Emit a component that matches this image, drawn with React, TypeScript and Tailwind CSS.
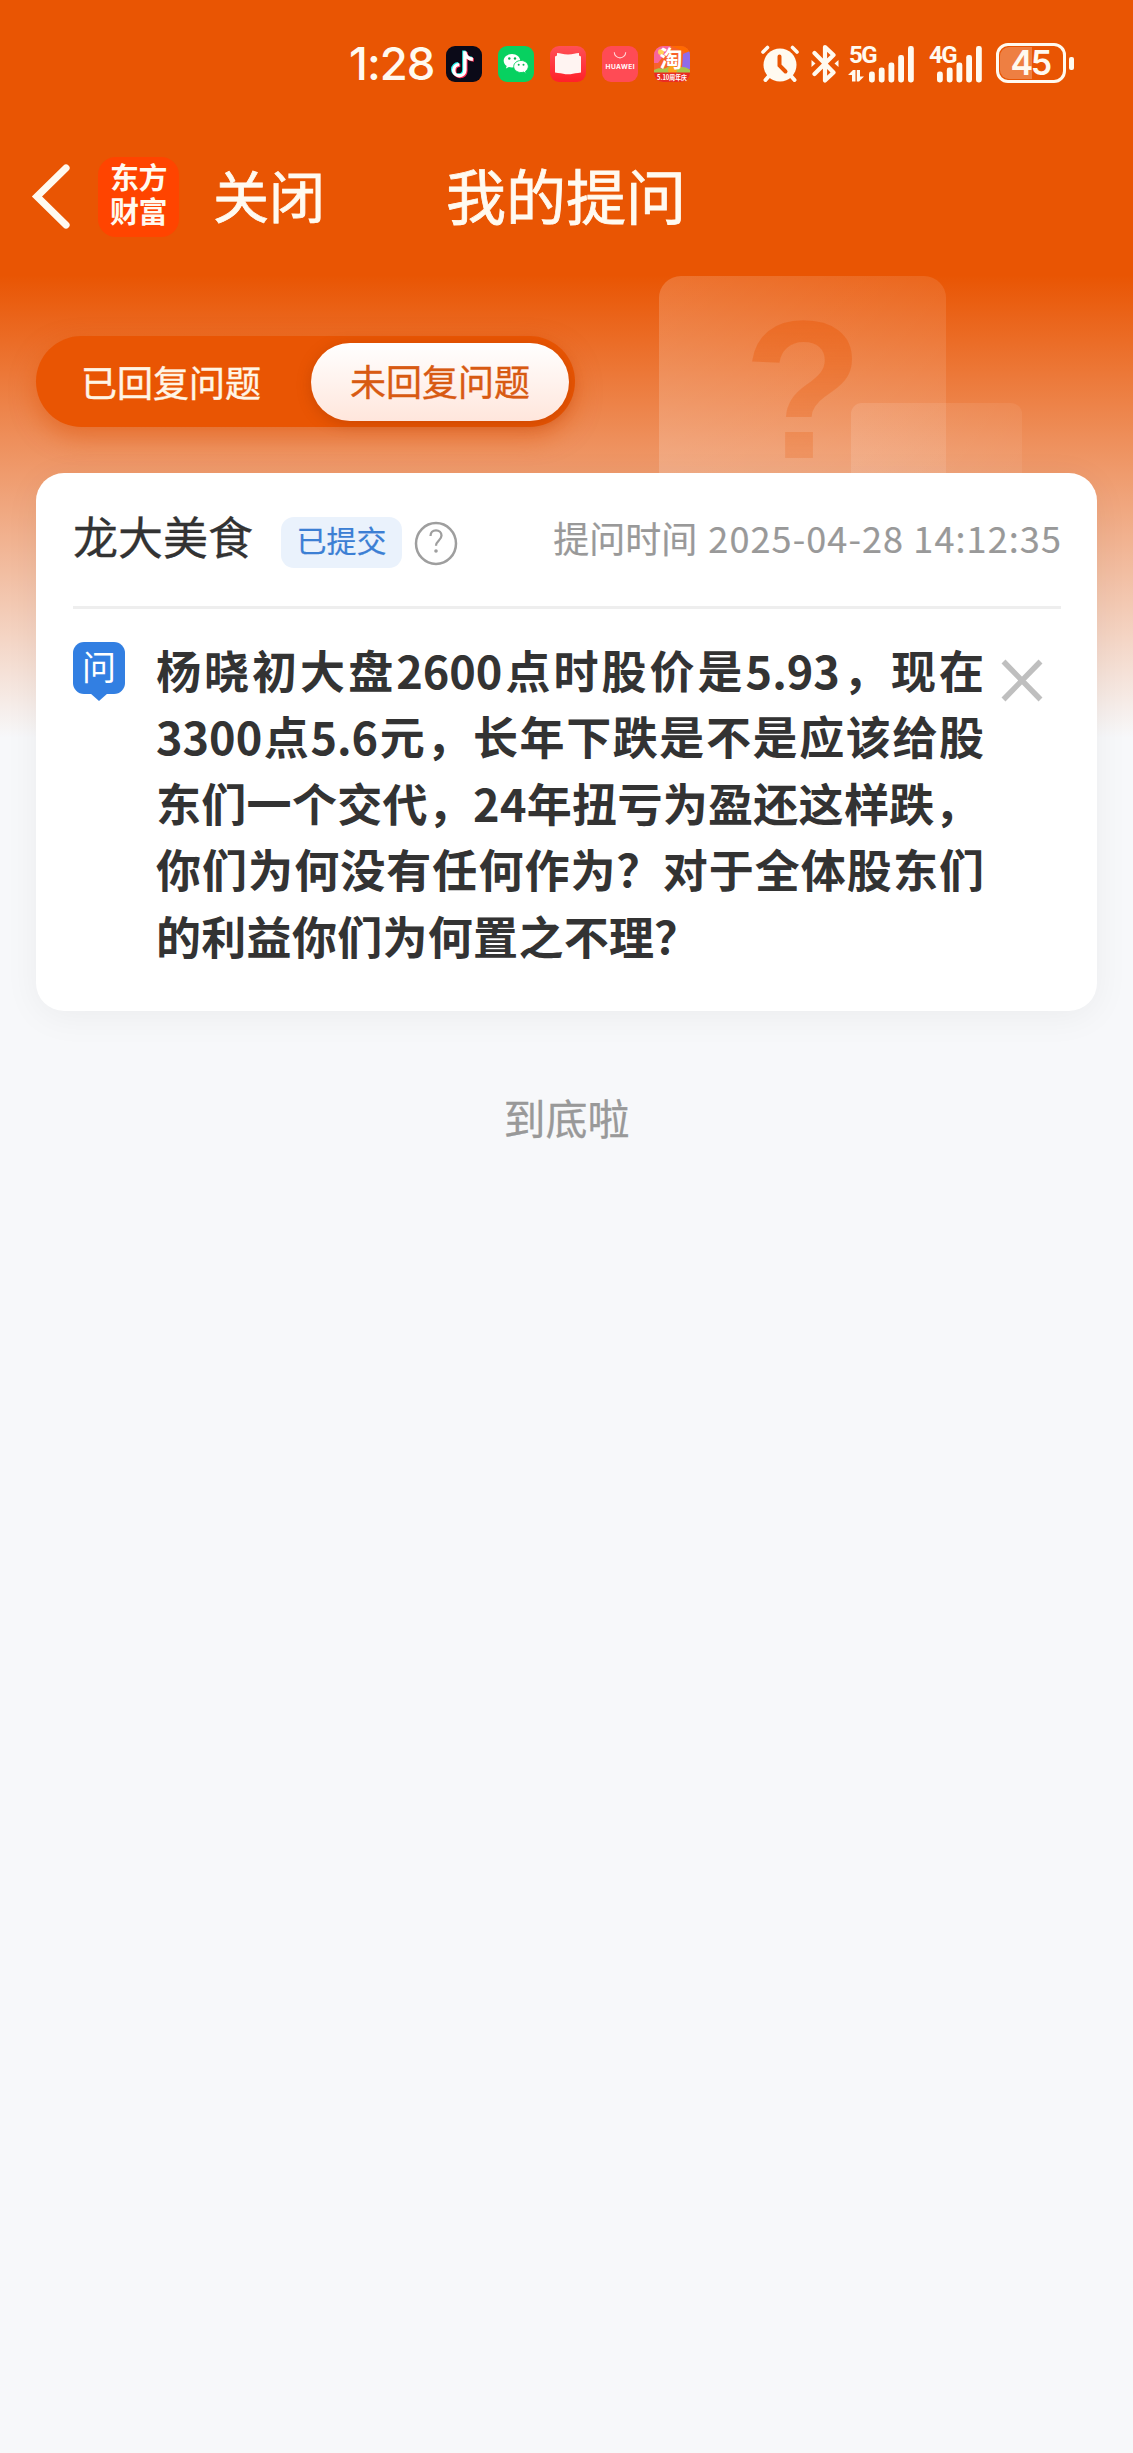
import React from "react";

const questionLines = [
  "杨晓初大盘2600点时股价是5.93，现在",
  "3300点5.6元，长年下跌是不是应该给股",
  "东们一个交代，24年扭亏为盈还这样跌，",
  "你们为何没有任何作为？对于全体股东们",
  "的利益你们为何置之不理？",
];

// lines that end in punctuation keep their natural width
const isLoose = (line: string) => /[，？]$/.test(line);

const bars = [
  { x: 0, h: 11 },
  { x: 9.8, h: 15 },
  { x: 19.5, h: 20 },
  { x: 29.2, h: 27.5 },
  { x: 39, h: 36.5 },
];

const SignalBars: React.FC = () => (
  <svg width="45" height="38" viewBox="0 0 45 38" fill="#fffaf0">
    {bars.map((b) => (
      <rect key={b.x} x={b.x} y={37.5 - b.h} width="5.8" height={b.h} rx="2.4" />
    ))}
  </svg>
);

const StatusBar: React.FC = () => {
  return (
    <div className="flex h-32 items-start pt-[45px] text-[#fffaf0]">
      <div className="ml-[349px] w-[97px] font-[Inter,'Noto_Sans_CJK_SC',sans-serif] text-[45.5px] font-medium leading-[37px] tracking-[-1px]">
        1:28
      </div>
      <div className="mt-px flex gap-4">
        {/* TikTok */}
        <svg width="36" height="36" viewBox="0 0 36 36">
          <rect width="36" height="36" rx="9" fill="#0b0a18" />
          <g fill="none" strokeWidth="3.4">
            <path d="M18.5 5v19a5.6 5.6 0 1 1-5.6-5.6M18.5 6c.6 4 3.4 6.6 8 7" stroke="#25f4ee" transform="translate(-.6 -.6)" />
            <path d="M18.5 5v19a5.6 5.6 0 1 1-5.6-5.6M18.5 6c.6 4 3.4 6.6 8 7" stroke="#fe2c55" transform="translate(1.4 1)" />
            <path d="M18.5 5v19a5.6 5.6 0 1 1-5.6-5.6M18.5 6c.6 4 3.4 6.6 8 7" stroke="#fff" transform="translate(.4 .2)" />
          </g>
        </svg>
        {/* WeChat */}
        <svg width="36" height="36" viewBox="0 0 36 36">
          <rect width="36" height="36" rx="9" fill="#07d160" />
          <path d="M14 8c-4.6 0-8.3 3-8.3 6.8 0 2.1 1.2 4 3 5.2l-.8 2.5 3-1.5c1 .3 2 .5 3.1.5 4.6 0 8.3-3 8.3-6.7S18.6 8 14 8z" fill="#fff" />
          <path d="M23 14.5c-4.1 0-7.3 2.7-7.3 6s3.2 6 7.3 6c.9 0 1.8-.1 2.6-.4l2.6 1.4-.7-2.2c1.7-1.1 2.8-2.8 2.8-4.8 0-3.3-3.2-6-7.3-6z" fill="#fff" stroke="#07d160" strokeWidth=".9" />
          <g fill="#07b653">
            <circle cx="11.3" cy="12.5" r="1.2" />
            <circle cx="17" cy="12.5" r="1.2" />
            <circle cx="20.7" cy="18.7" r="1" />
            <circle cx="25.5" cy="18.7" r="1" />
          </g>
        </svg>
        {/* Reader */}
        <svg width="36" height="36" viewBox="0 0 36 36">
          <defs>
            <linearGradient id="reader" x1="0" y1="0" x2="0" y2="1">
              <stop offset="0" stopColor="#ff5057" />
              <stop offset="1" stopColor="#ff2029" />
            </linearGradient>
          </defs>
          <rect width="36" height="36" rx="9" fill="url(#reader)" />
          <path d="M5 26.5v-16l2-1V7c3.500 0 6 1.600 11 1.600S25.500 7 29 7v2.500l2 1v16c-4 .6-7.500.8-10.500 1.700h-5c-3-.9-6.500-1.100-10.500-1.700z" fill="#fff4f2" />
        </svg>
        {/* Huawei */}
        <svg width="36" height="36" viewBox="0 0 36 36">
          <rect width="36" height="36" rx="9" fill="#ff4b55" />
          <path d="M12.3 6.2a5.7 5.7 0 0 0 11.4 0" fill="none" stroke="#ffd5d5" strokeWidth="1.1" />
          <text x="18" y="23.2" textAnchor="middle" textLength="29" fontSize="6.6" fontWeight="700" fontFamily="Inter, sans-serif" fill="#fff">HUAWEI</text>
        </svg>
        {/* Taobao */}
        <svg className="overflow-visible" width="36" height="36" viewBox="0 0 36 36">
          <defs>
            <clipPath id="tb"><rect width="36" height="36" rx="9" /></clipPath>
          </defs>
          <g clipPath="url(#tb)">
            <rect width="36" height="36" fill="#f8612a" />
            <path d="M0 0h17L10 9 4 17H0z" fill="#f8659c" />
            <path d="M17 0h19v8z" fill="#ff6a00" />
            <path d="M29 8l7-3v18h-8z" fill="#8f6bea" />
            <circle cx="7" cy="6" r="3" fill="#ffd25a" />
            <path d="M0 24c6-4 9 0 12-2l5-3 6 3c4-1 8-2 13 2v3H0z" fill="#a9c44b" />
            <circle cx="18.5" cy="24" r="4.5" fill="#f9a51c" />
            <rect y="26.5" width="36" height="10" fill="#e92b22" />
          </g>
          <text x="17" y="21" textAnchor="middle" fontSize="23" fontWeight="700" fontFamily="'Noto Sans CJK SC', sans-serif" fill="#fff">淘</text>
          <text x="18" y="33.5" textAnchor="middle" textLength="30" lengthAdjust="spacingAndGlyphs" fontSize="7" fontWeight="700" fontFamily="'Noto Sans CJK SC', sans-serif" fill="#fff">5.10周年庆</text>
        </svg>
      </div>
      {/* Alarm */}
      <svg className="ml-[70px]" width="40" height="37" viewBox="0 0 40 37" fill="none" strokeLinecap="round">
        <circle cx="20" cy="20" r="16.5" fill="#fffaf0" />
        <path d="M3 7l4.5-4.5M37 7l-4.5-4.5" stroke="#fffaf0" strokeWidth="3.6" />
        <path d="M9 31l-3.5 4M31 31l3.5 4" stroke="#fffaf0" strokeWidth="4" />
        <path d="M19.5 11.500v9l6 6" stroke="#e95503" strokeWidth="4" />
      </svg>
      {/* Bluetooth */}
      <svg className="-mt-px ml-[11px]" width="28" height="39" viewBox="0 0 28 39" fill="none" stroke="#fffaf0">
        <path d="M3.5 9L22.500 28.500 14 36.500V24M14 15V3l8.500 8L3.500 30" strokeWidth="4.200" strokeLinecap="round" strokeLinejoin="round" />
        <path d="M.5 16v7l4-3.500zM27.500 16v7l-4-3.500z" fill="#fffaf0" stroke="none" />
      </svg>
      {/* 5G */}
      <div className="relative ml-[9px] flex w-[68px] justify-end pr-[2px]">
        <span className="absolute left-px -top-px font-[Roboto,sans-serif] text-[24px] font-bold leading-[22px] tracking-[-1.5px]">5G</span>
        <svg className="absolute left-0 top-[25px]" width="16" height="12" viewBox="0 0 16 12" fill="#fffaf0">
          <path d="M0 5L5 0h2.500v11.500H4V5zM16 6.500l-5 5H8.800V0H12v6.500z" />
        </svg>
        <SignalBars />
      </div>
      {/* 4G */}
      <div className="relative ml-[12px] flex w-[56px] justify-end pr-[2px]">
        <span className="absolute left-px -top-px font-[Roboto,sans-serif] text-[24px] font-bold leading-[22px] tracking-[-1.5px]">4G</span>
        <SignalBars />
      </div>
      {/* Battery */}
      <div className="-mt-[2px] ml-[12px] flex items-center">
        <div className="relative flex h-10 w-[70px] items-center justify-center overflow-hidden rounded-[12px] border-[3px] border-[#fffaf0]">
          <div className="absolute inset-y-[1px] left-[1px] w-[32px] rounded-l-[9px] bg-white/25" />
          <span className="relative -left-px font-[Inter,sans-serif] text-[34px] font-semibold leading-none tracking-[-2.5px]">45</span>
        </div>
        <div className="ml-[3px] h-[13px] w-[4.5px] rounded-[2px] bg-[#fffaf0]" />
      </div>
    </div>
  );
};

const NavBar: React.FC = () => {
  return (
    <div className="flex h-[138px] items-start pt-[29px] text-[#fffaf0]">
      <svg className="ml-[30px] mt-[5px]" width="40" height="68" viewBox="0 0 40 68" fill="none">
        <path d="M36 6L7 34.500 36 63" stroke="#fffaf0" strokeWidth="7.200" strokeLinecap="round" />
      </svg>
      <div className="ml-[28px] flex h-20 w-[81px] flex-col items-center rounded-[18px] bg-[#ff4400] pt-[2px] text-[29px] font-bold leading-[34px] tracking-[-0.5px]">
        <span>东方</span>
        <span>财富</span>
      </div>
      <span className="ml-[34px] mt-[7px] w-[114px] text-[56px] leading-[60px] [-webkit-text-stroke:0.8px]">关闭</span>
      <span className="ml-[119px] mt-[7px] text-[60px] leading-[60px] [-webkit-text-stroke:0.8px]">我的提问</span>
    </div>
  );
};

const Tabs: React.FC = () => {
  return (
    <div className="relative ml-9 mt-[70px] flex h-[91px] w-[539px] items-center justify-between rounded-full bg-[#e95503] pr-[6px] text-[36px] shadow-[0_10px_24px_rgba(222,84,10,0.5)] [-webkit-text-stroke:0.4px]">
      <span className="w-[275px] pb-[2px] pl-[45px] leading-[40px] text-[#fff5e6]">已回复问题</span>
      <span className="flex h-[78px] w-[258px] items-center justify-center rounded-full bg-linear-to-b from-white to-[#ffe6dc] pb-[3px] text-[#d85a12] shadow-[0_3px_14px_rgba(150,50,0,0.35)]">
        未回复问题
      </span>
    </div>
  );
};

const Decoration: React.FC = () => {
  return (
    <div className="absolute left-[659px] top-[276px] h-[220px] w-[363px]">
      <div className="absolute left-0 top-0 h-full w-[287px] rounded-t-[22px] bg-linear-to-r from-white/18 to-white/10" />
      <span className="absolute left-[84px] top-[16px] bg-linear-to-b from-[#e95503]/45 to-[#e95503]/15 bg-clip-text font-['Liberation_Sans',sans-serif] text-[197px] font-bold leading-[197px] text-transparent">
        ?
      </span>
      <div className="absolute left-[192px] top-[127px] h-[93px] w-[171px] rounded-t-[11px] bg-linear-to-r from-white/12 to-white/6" />
    </div>
  );
};

const QuestionCard: React.FC = () => {
  return (
    <div className="relative mx-9 mt-[46px] h-[538px] rounded-[28px] bg-white pl-[37px] pr-9 shadow-[0_6px_36px_rgba(0,0,0,0.05)]">
      <div className="flex h-[136px] items-start border-b-[3px] border-[#eeeeee] pt-[40px]">
        <span className="w-[208px] text-[45px] leading-[45px] text-[#333333] [-webkit-text-stroke:0.3px]">龙大美食</span>
        <span className="mt-[4px] flex h-[51px] w-[121px] items-center justify-center rounded-[13px] bg-[#eaf2fc] pb-[7px] text-[30px] leading-none text-[#3c7fd4] [-webkit-text-stroke:0.2px]">
          已提交
        </span>
        <svg className="ml-[12px] mt-[8px]" width="44" height="45" viewBox="0 0 44 45" fill="none" stroke="#9e9e9e">
          <ellipse cx="22" cy="22.5" rx="20" ry="20.5" strokeWidth="2.5" />
          <path d="M16.5 15c0-3.400 2.400-5.600 5.500-5.600s5.500 2.100 5.500 5.200c0 4.800-5.500 5-5.500 10.200" strokeWidth="2.3" />
          <circle cx="22" cy="30" r="1.8" fill="#9e9e9e" stroke="none" />
        </svg>
        <div className="ml-auto mt-[2px] flex gap-[11px] whitespace-nowrap text-[36px] leading-[45px] text-[#999999] [-webkit-text-stroke:0.2px]">
          <span>提问时间</span>
          <span className="-mr-px tracking-[1.1px]">2025-04-28 14:12:35</span>
        </div>
      </div>
      <div className="flex pt-[27px]">
        <div className="relative mt-[6px] flex h-[52px] w-[52px] items-center justify-center rounded-[11px] bg-[#327fe2] pb-[4px] text-[34px] leading-none text-white">
          问
          <svg className="absolute left-[17px] top-[51px]" width="18" height="8" viewBox="0 0 18 8" fill="#327fe2">
            <path d="M0 0h18l-9 8z" />
          </svg>
        </div>
        <div className="ml-[31px] mt-[1px] w-[828px] text-[45px] font-bold leading-[66.4px] text-[#333333]">
          {questionLines.map((line) => (
            <p
              key={line}
              className={
                isLoose(line)
                  ? "whitespace-nowrap tracking-[0.3px]"
                  : "whitespace-nowrap [text-align-last:justify]"
              }
            >
              {line}
            </p>
          ))}
        </div>
        <svg className="ml-[17px] mt-[23px]" width="42" height="43" viewBox="0 0 42 43" fill="none">
          <path d="M2.5 2.5l37 38M39.5 2.5l-37 38" stroke="#bfbfbf" strokeWidth="5.5" />
        </svg>
      </div>
    </div>
  );
};

const App: React.FC = () => {
  return (
    <div
      lang="zh-CN"
      className="relative min-h-[2453px] w-[1133px] overflow-hidden bg-[#f7f8fa] bg-[linear-gradient(to_bottom,#e95503_0px,#e95503_275px,#f7f8fa_738px)] font-['Noto_Sans_CJK_SC',sans-serif]"
    >
      <Decoration />
      <div className="relative">
        <StatusBar />
        <NavBar />
        <Tabs />
        <QuestionCard />
        <div className="mt-[76px] text-center text-[42px] leading-[60px] text-[#999999] [-webkit-text-stroke:0.3px]">到底啦</div>
      </div>
    </div>
  );
};

export default App;
